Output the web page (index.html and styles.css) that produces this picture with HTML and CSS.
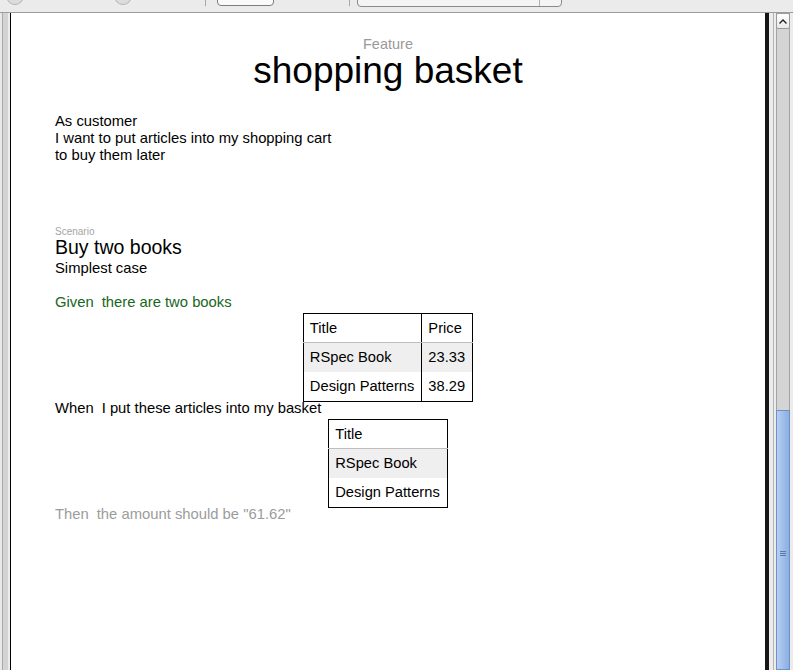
FILE: index.html
```html
<!DOCTYPE html>
<html>
<head>
<meta charset="utf-8">
<title>shopping basket</title>
<link rel="stylesheet" href="styles.css">
</head>
<body>
<div class="toolbar">
  <span class="tb-circle tb-c1"></span>
  <span class="tb-circle tb-c2"></span>
  <span class="tb-sep tb-s1"></span>
  <span class="tb-button"></span>
  <span class="tb-sep tb-s2"></span>
  <span class="tb-field"><span class="tb-field-drop"></span></span>
</div>
<div class="main">
  <div class="left-frame"></div>
  <div class="content">
    <div class="feature-label">Feature</div>
    <h1 class="feature-title">shopping basket</h1>
    <div class="narrative">
      <div>As customer</div>
      <div>I want to put articles into my shopping cart</div>
      <div>to buy them later</div>
    </div>
    <div class="scenario">
      <div class="scenario-label">Scenario</div>
      <h2 class="scenario-title">Buy two books</h2>
      <div class="scenario-desc">Simplest case</div>
      <div class="step step-given"><span class="kw">Given</span>there are two books</div>
      <table class="data-table">
        <tr class="head"><td>Title</td><td>Price</td></tr>
        <tr class="shade"><td>RSpec Book</td><td>23.33</td></tr>
        <tr><td>Design Patterns</td><td>38.29</td></tr>
      </table>
      <div class="step step-when"><span class="kw">When</span>I put these articles into my basket</div>
      <table class="data-table">
        <tr class="head"><td>Title</td></tr>
        <tr class="shade"><td>RSpec Book</td></tr>
        <tr><td>Design Patterns</td></tr>
      </table>
      <div class="step step-then"><span class="kw">Then</span>the amount should be "61.62"</div>
    </div>
  </div>
  <div class="right-frame"></div>
  <div class="scrollbar">
    <div class="sb-up"><svg width="8" height="5" viewBox="0 0 8 5"><path d="M0.5 4.5 L4 1 L7.5 4.5" fill="none" stroke="#222" stroke-width="1.4"/></svg></div>
    <div class="sb-track"></div>
    <div class="sb-thumb"><span class="grip"></span><span class="grip"></span><span class="grip"></span></div>
  </div>
  <div class="edge"></div>
</div>
</body>
</html>
```

FILE: styles.css
```css
html, body {
  margin: 0;
  padding: 0;
}
body {
  width: 793px;
  height: 670px;
  overflow: hidden;
  background: #ebebeb;
  font-family: "Liberation Sans", Arial, Helvetica, sans-serif;
  font-size: 14.8px;
  color: #000;
}

/* top chrome */
.toolbar {
  height: 12px;
  border-bottom: 1px solid #9c9c9c;
  background: #ebebeb;
  display: flex;
  align-items: flex-start;
  overflow: hidden;
}
.tb-circle {
  display: block;
  width: 16px;
  height: 16px;
  border-radius: 50%;
  margin-top: -13px;
  border: 1px solid #b5b5b5;
  background: #dcdcdc;
}
.tb-c1 { margin-left: 6px; }
.tb-c2 { margin-left: 90px; }
.tb-sep {
  display: block;
  width: 1px;
  height: 6px;
  background: #a8a8a8;
}
.tb-s1 { margin-left: 73px; }
.tb-button {
  display: block;
  width: 55px;
  height: 8px;
  margin-top: -4px;
  margin-left: 11px;
  border: 1px solid #7d7d7d;
  border-radius: 0 0 4px 4px;
  background: #fafafa;
}
.tb-s2 { margin-left: 75px; }
.tb-field {
  display: flex;
  justify-content: flex-end;
  width: 203px;
  height: 9px;
  margin-top: -4px;
  margin-left: 7px;
  border: 1px solid #8a8a8a;
  border-radius: 0 0 4px 4px;
  background: #f4f4f4;
}
.tb-field-drop {
  display: block;
  width: 21px;
  border-left: 1px solid #b0b0b0;
}

/* main area */
.main {
  display: flex;
  height: 657px;
}
.left-frame {
  width: 10px;
  background: linear-gradient(90deg, #e9e9e9 0 2px, #a9a9a9 2px 3px, #d3d3d3 3px 8px, #ececec 8px 10px);
}
.content {
  flex: 1;
  background: #fff;
  border-left: 1px solid #000;
  border-right: 4px solid #161616;
  padding: 25px 44px 0 44px;
}
.right-frame {
  width: 7px;
  background: linear-gradient(90deg, #ececec 0 4px, #b4b4b4 4px 5px, #ececec 5px 7px);
}
.scrollbar {
  width: 12px;
  background: #d4d4d4;
  border-left: 1px solid #a3a3a3;
  border-right: 1px solid #a3a3a3;
  display: flex;
  flex-direction: column;
}
.edge {
  width: 3px;
  background: #ececec;
}
.sb-up {
  height: 16px;
  border: 1px solid #9a9a9a;
  border-radius: 2px;
  margin: 0 -1px;
  background: linear-gradient(#ffffff, #e9e9e9);
  display: flex;
  justify-content: center;
  padding-top: 5px;
  box-sizing: border-box;
}
.sb-up svg { display: block; }
.sb-track {
  height: 381px;
}
.sb-thumb {
  flex: 1;
  margin: 0 -1px;
  border: 1px solid #6e90c6;
  background: linear-gradient(90deg, #b8d0f2, #9bbbe8 60%, #8cafe2);
  display: flex;
  flex-direction: column;
  align-items: center;
  gap: 1px;
  padding-top: 140px;
}
.grip {
  display: block;
  width: 6px;
  height: 1px;
  background: #5a79ae;
}

/* feature */
.feature-label {
  text-align: center;
  color: #9a9a9a;
  font-size: 14.5px;
  line-height: 13px;
}
.feature-title {
  margin: 2px 0 0;
  text-align: center;
  font-weight: normal;
  font-size: 37px;
  line-height: 36px;
}
.narrative {
  margin-top: 24px;
  line-height: 17px;
}

/* scenario */
.scenario {
  margin-top: 62px;
}
.scenario-label {
  font-size: 10px;
  line-height: 12px;
  color: #a4a4a4;
}
.scenario-title {
  margin: -2px 0 0;
  font-weight: normal;
  font-size: 19.5px;
  line-height: 22px;
}
.scenario-desc {
  margin-top: 2px;
  line-height: 17px;
}
.step {
  line-height: 17px;
}
.kw {
  margin-right: 8px;
}
.step-given {
  margin-top: 17px;
  color: #17661a;
}
.step-then {
  color: #9c9c9c;
}
.data-table {
  border-collapse: collapse;
  border: 1px solid #000;
  margin: 2px auto -2px;
  font-size: 14.7px;
}
.data-table td {
  padding: 6px 7px 6px 6px;
  line-height: 17px;
  border-left: 1px solid #000;
}
.data-table tr.head td {
  border-bottom: 1px solid #bdbdbd;
  padding-bottom: 5px;
}
.data-table tr.shade td {
  background: #efefef;
}
```
